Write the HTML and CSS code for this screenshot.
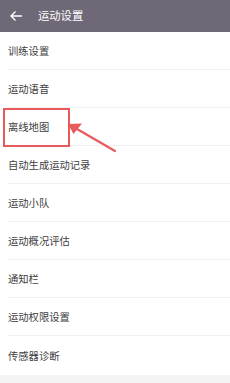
FILE: index.html
```html
<!DOCTYPE html>
<html lang="zh-CN">
<head>
<meta charset="utf-8">
<link rel="stylesheet" href="styles.css">
</head>
<body>
<div class="app">
  <header class="bar">
    <svg class="back" width="14" height="12" viewBox="0 0 14 12"><path d="M13 6H2M6.5 1.5L2 6l4.5 4.5" fill="none" stroke="#fff" stroke-width="1.4"/></svg>
    <span class="title">运动设置</span>
  </header>
  <ul class="list">
    <li class="row">训练设置</li>
    <li class="row">运动语音</li>
    <li class="row"><span class="mark">离线地图</span></li>
    <li class="row">自动生成运动记录</li>
    <li class="row">运动小队</li>
    <li class="row">运动概况评估</li>
    <li class="row">通知栏</li>
    <li class="row">运动权限设置</li>
    <li class="row last">传感器诊断</li>
  </ul>
  <div class="foot"></div>
  <svg class="arrow" width="60" height="40" viewBox="0 0 60 40"><path d="M50 35L12 13" stroke="#e95a5b" stroke-width="2.2" stroke-linecap="round"/><path d="M3 8L17 7.5L8.5 18Z" fill="#e95a5b"/></svg>
</div>
</body>
</html>
```
FILE: styles.css
```css
* { box-sizing: border-box; margin: 0; padding: 0; }
body { font-family: "Noto Sans CJK SC", "Noto Sans", sans-serif; background: #fff; width: 230px; height: 383px; overflow: hidden; }
.app { position: relative; height: 383px; display: flex; flex-direction: column; }
.bar { height: 32px; background: #6f6876; display: flex; align-items: center; padding-left: 9px; color: #fff; }
.back { display: block; }
.title { margin-left: 15px; font-size: 11.3px; line-height: 1; margin-top: -1px; }
.list { list-style: none; }
.row { height: 38px; display: flex; align-items: center; margin-left: 8px; font-size: 10.3px; color: #404040; border-bottom: 1px solid #f1f1f1; }
.row.last { border-bottom: none; height: 39px; }
.mark { position: relative; }
.mark::before { content: ""; position: absolute; left: -5px; top: -11px; width: 63px; height: 35px; border: 2px solid #e8595a; }
.foot { flex: 1; background: #f4f4f4; }
.arrow { position: absolute; left: 65px; top: 116px; }
```
